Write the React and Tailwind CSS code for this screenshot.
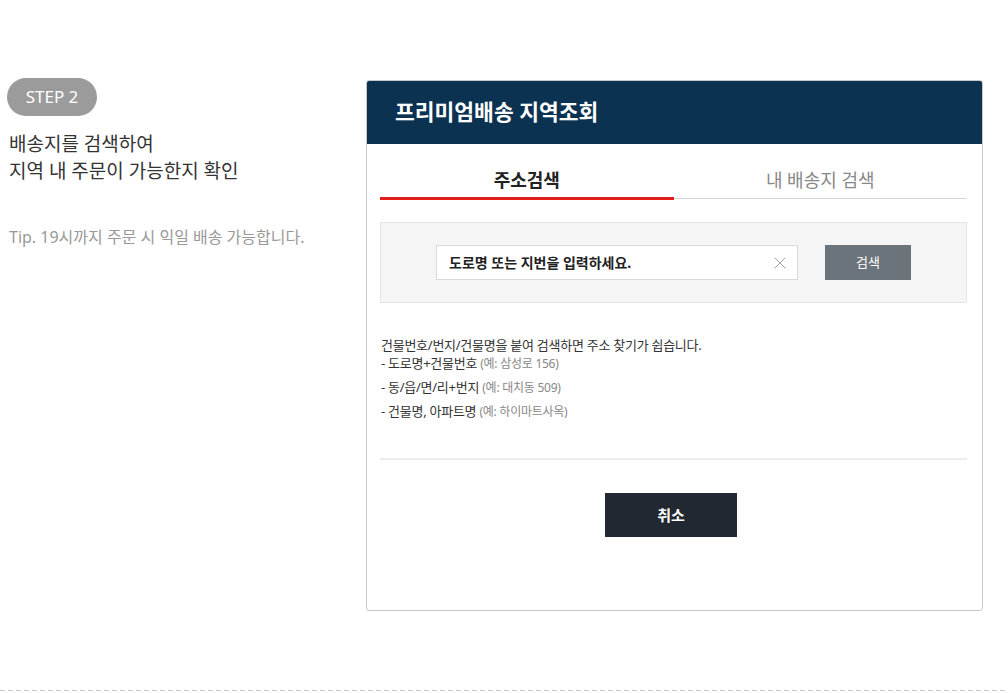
import { X } from 'lucide-react';

const font = { fontFamily: '"Noto Sans", "Noto Sans CJK KR", sans-serif' };

const tips = [
  { main: '- 도로명+건물번호', ex: '(예: 삼성로 156)' },
  { main: '- 동/읍/면/리+번지', ex: '(예: 대치동 509)' },
  { main: '- 건물명, 아파트명', ex: '(예: 하이마트사옥)' },
];

const App = () => {
  return (
    <div className="w-[1008px] h-[693px] bg-white overflow-hidden" style={font}>
      <div className="flex items-start pt-[78px] pl-[7px]">
        <div className="w-[359px] shrink-0">
          <div className="w-[90px] h-[38px] rounded-full bg-[#9b9b9b] text-white text-[17px] flex items-center justify-center">
            STEP 2
          </div>
          <div className="mt-[15px] pl-[2px] text-[19px] leading-[27px] text-[#333]">
            <p>배송지를 검색하여</p>
            <p>지역 내 주문이 가능한지 확인</p>
          </div>
          <p className="mt-[41px] pl-[2px] text-[16px] leading-[22px] text-[#999]">
            Tip. 19시까지 주문 시 익일 배송 가능합니다.
          </p>
        </div>

        <div className="mt-[2px] w-[617px] h-[531px] shrink-0 rounded-[3px] border border-[#c8c8c8] overflow-hidden flex flex-col">
          <div className="h-[63px] bg-[#0b3251] px-[28px] flex items-center">
            <h1 className="text-white text-[21.5px] font-bold">프리미엄배송 지역조회</h1>
          </div>

          <div className="pl-[13px] pr-[15px] flex-1 flex flex-col">
            <div className="flex items-start mt-[20px]">
              <div className="w-1/2 h-[36px] pt-[4px] flex items-start justify-center border-b-[3px] border-[#e21b1b]">
                <span className="text-[18px] leading-[24px] font-bold text-[#222]">주소검색</span>
              </div>
              <div className="w-1/2 h-[35px] pt-[4px] flex items-start justify-center border-b border-[#d5d5d5]">
                <span className="text-[18px] leading-[24px] text-[#888]">내 배송지 검색</span>
              </div>
            </div>

            <div className="mt-[22px] h-[81px] bg-[#f5f5f5] border border-[#e5e5e5] flex items-center justify-center gap-[27px]">
              <div className="w-[362px] h-[35px] bg-white border border-[#d9d9d9] flex items-center justify-between pl-[12px] pr-[7px]">
                <span className="text-[14px] font-bold text-[#222]">도로명 또는 지번을 입력하세요.</span>
                <X className="w-[20px] h-[20px] text-[#9a9a9a]" strokeWidth={1.1} />
              </div>
              <button className="w-[86px] h-[35px] bg-[#6b737b] text-white text-[13px]">검색</button>
            </div>

            <div className="mt-[33px] pl-[1px] text-[13px] leading-[18px] text-[#333] tracking-[-0.02em]">
              <p>건물번호/번지/건물명을 붙여 검색하면 주소 찾기가 쉽습니다.</p>
              <ul>
                {tips.map((t, i) => (
                  <li key={i} className={i > 0 ? 'mt-[5px]' : ''}>
                    {t.main} <span className="text-[12px] text-[#888]">{t.ex}</span>
                  </li>
                ))}
              </ul>
            </div>

            <div className="mt-[37px] h-[2px] bg-[#ececec]" />

            <div className="flex justify-center pr-[5px] mt-[33px]">
              <button className="w-[132px] h-[44px] bg-[#222831] text-white text-[15px] font-bold">취소</button>
            </div>
          </div>
        </div>
      </div>

      <div className="mt-[79px] h-[1px] bg-[linear-gradient(to_right,#c8c8c8_5px,transparent_5px)] bg-[length:8px_1px]" />
    </div>
  );
};

export default App;
